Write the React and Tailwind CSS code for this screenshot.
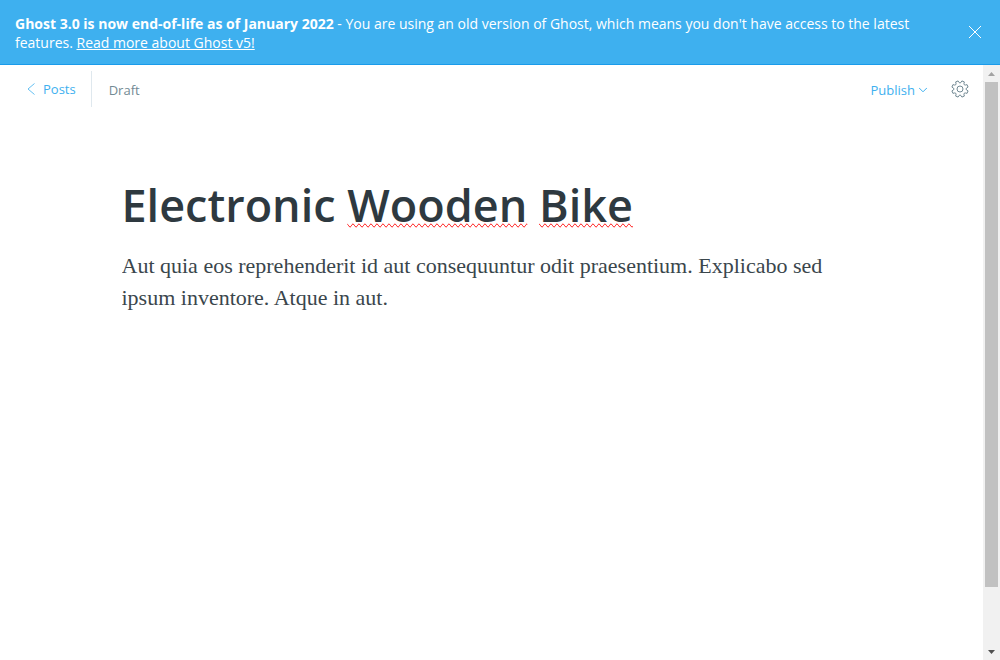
import React from "react";

function Banner() {
  return (
    <aside className="flex min-h-[65px] shrink-0 items-start border-b border-[#1a9bea] bg-[#3eb0ef] px-[15px] pt-[14px] text-white">
      <p className="min-w-0 flex-1 pr-10 text-[14px] leading-[19px]">
        <strong className="font-bold">Ghost 3.0 is now end-of-life as of January 2022</strong>
        {" - You are using an old version of Ghost, which means you don't have access to the latest features. "}
        <a href="#upgrade" className="underline">Read more about Ghost v5!</a>
      </p>
      <button type="button" aria-label="Close" className="mt-3 mr-1 size-3">
        <svg viewBox="0 0 12 12" className="block size-3" fill="none" stroke="currentColor" strokeWidth="1">
          <path d="M0 0 12 12M12 0 0 12" />
        </svg>
      </button>
    </aside>
  );
}

function GearIcon() {
  const r = (a, d) => `${(9 + d * Math.cos(a)).toFixed(2)} ${(9 + d * Math.sin(a)).toFixed(2)}`;
  let path = "";
  for (let i = 0; i < 8; i++) {
    const a = (i * Math.PI) / 4 + Math.PI / 8;
    path += `${i ? "L" : "M"}${r(a - 0.16, 8.3)}L${r(a + 0.16, 8.3)}Q${r(a + 0.24, 6)} ${r(a + 0.393, 6)}Q${r(a + 0.545, 6)} ${r(a + 0.625, 8.3)}`;
  }
  return (
    <svg viewBox="0 0 18 18" className="block size-[18px]" fill="none" stroke="currentColor" strokeWidth="1" strokeLinejoin="round">
      <path d={path + "Z"} />
      <circle cx="9" cy="9" r="3" />
    </svg>
  );
}

function Header() {
  return (
    <header className="flex h-12 shrink-0 items-center pl-[27px] pr-[14px] text-[13px] leading-[18px]">
      <a href="#posts" className="flex items-center gap-2 text-[#3eb0ef]">
        <svg viewBox="0 0 8 12" className="block h-3 w-2" fill="none" stroke="currentColor" strokeWidth="0.8">
          <path d="M7.5 0.5 1 6l6.5 5.5" />
        </svg>
        Posts
      </a>
      <span className="ml-[15px] flex h-9 items-center border-l border-[#dfe8ee] pl-[17px] pt-[2px] text-[#738a94]">Draft</span>
      <button type="button" className="ml-auto flex items-center gap-1 pt-[2px] text-[#3eb0ef]">
        Publish
        <svg viewBox="0 0 8 6" className="block h-[6px] w-2" fill="none" stroke="currentColor" strokeWidth="1">
          <path d="m0 .8 4 4 4-4" />
        </svg>
      </button>
      <button type="button" aria-label="Settings" className="ml-6 text-[#738a94]">
        <GearIcon />
      </button>
    </header>
  );
}

function Misspelt({ children }) {
  return <span className="[text-decoration-line:spelling-error]">{children}</span>;
}

function ScrollBar() {
  return (
    <div className="flex w-[17px] shrink-0 flex-col bg-[#f1f1f1]">
      <button type="button" aria-label="Scroll up" className="flex h-[17px] items-center justify-center text-[#a3a3a3]">
        <svg viewBox="0 0 7 4" className="block h-1 w-[7px]" fill="currentColor"><path d="M0 4 3.5 0 7 4Z" /></svg>
      </button>
      <div className="flex-1 px-[2px]">
        <div className="h-[90%] bg-[#c1c1c1]" />
      </div>
      <button type="button" aria-label="Scroll down" className="flex h-[17px] items-center justify-center text-[#505050]">
        <svg viewBox="0 0 7 4" className="block h-1 w-[7px]" fill="currentColor"><path d="M0 0h7L3.5 4Z" /></svg>
      </button>
    </div>
  );
}

export default function App() {
  return (
    <div className="flex h-screen flex-col bg-white font-['Open_Sans','Noto_Sans',sans-serif]">
      <Banner />
      <div className="flex min-h-0 flex-1">
        <div className="flex min-w-0 flex-1 flex-col">
          <Header />
          <main className="mx-auto w-full max-w-[740px] flex-1 overflow-hidden pt-16">
            <h1 className="text-[45px] leading-[56px] font-semibold text-[#2e3940]">
              Electronic <Misspelt>Wooden</Misspelt> <Misspelt>Bike</Misspelt>
            </h1>
            <p className="mt-[17px] font-['Georgia','Liberation_Serif',serif] text-[22px] leading-[32px] text-[#3a464c]">
              Aut quia eos reprehenderit id aut consequuntur odit praesentium. Explicabo sed ipsum inventore. Atque in aut.
            </p>
          </main>
        </div>
        <ScrollBar />
      </div>
    </div>
  );
}
